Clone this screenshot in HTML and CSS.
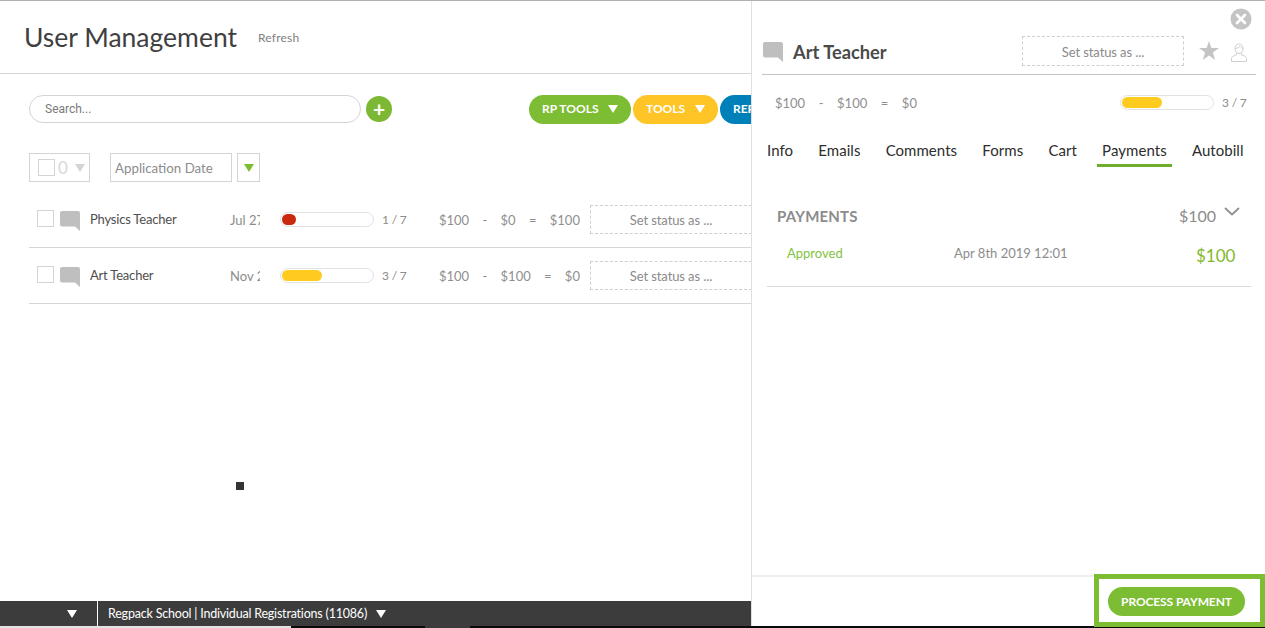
FILE: index.html
```html
<!DOCTYPE html>
<html lang="en">
<head>
<meta charset="utf-8">
<title>User Management</title>
<link rel="stylesheet" href="styles.css">
</head>
<body>
<svg class="defs" aria-hidden="true"><defs>
<symbol id="bubble" viewBox="0 0 20 20"><path d="M2 0H18a2 2 0 0 1 2 2V20L15 15.500H2a2 2 0 0 1-2-2V2a2 2 0 0 1 2-2Z" fill="#bfbfbf"/></symbol>
</defs></svg>
<div class="app">
  <main class="main">
    <header class="page-head">
      <h1 class="page-title">User Management</h1>
      <a class="refresh">Refresh</a>
    </header>
    <div class="toolbar">
      <div class="search">Search...</div>
      <span class="add">+</span>
      <div class="tools">
        <span class="pill pill-green">RP TOOLS<i class="tri"></i></span>
        <span class="pill pill-yellow">TOOLS<i class="tri"></i></span>
        <span class="pill pill-blue">REPORTS<i class="tri"></i></span>
      </div>
    </div>
    <div class="filters">
      <div class="select-box"><span class="check faint"></span><span class="count">0</span><i class="tri tri-grey"></i></div>
      <div class="sort-box">Application Date</div>
      <div class="sort-arrow"><i class="tri tri-green"></i></div>
    </div>
    <div class="row">
      <span class="check"></span>
      <svg class="bubble"><use href="#bubble"/></svg>
      <span class="name">Physics Teacher</span>
      <span class="date">Jul 27</span>
      <span class="progress"><span class="fill fill-red"></span></span>
      <span class="ratio">1 / 7</span>
      <span class="money"><span>$100</span><span>-</span><span>$0</span><span>=</span><span>$100</span></span>
      <span class="status">Set status as ...</span>
    </div>
    <div class="row">
      <span class="check"></span>
      <svg class="bubble"><use href="#bubble"/></svg>
      <span class="name">Art Teacher</span>
      <span class="date">Nov 27</span>
      <span class="progress"><span class="fill fill-yellow"></span></span>
      <span class="ratio">3 / 7</span>
      <span class="money"><span>$100</span><span>-</span><span>$100</span><span>=</span><span>$0</span></span>
      <span class="status">Set status as ...</span>
    </div>
    <span class="loader"></span>
    <footer class="bottom-bar">
      <div class="bar-left"><i class="tri"></i></div>
      <div class="bar-title">Regpack School | Individual Registrations (11086)<i class="tri"></i></div>
    </footer>
  </main>
  <aside class="panel">
    <div class="panel-close">
      <svg width="22" height="22" viewBox="0 0 22 22"><circle cx="11" cy="11" r="10.500" fill="#c4c4c4"/><path d="M7 7L15 15M15 7L7 15" stroke="#fff" stroke-width="2.600" stroke-linecap="round"/></svg>
    </div>
    <div class="panel-head">
      <svg class="bubble panel-bubble"><use href="#bubble"/></svg>
      <h2 class="panel-name">Art Teacher</h2>
      <span class="status status-panel">Set status as ...</span>
      <svg class="star" width="20" height="19" viewBox="0 0 20 19"><path d="M10 0L12.400 6.900H20L13.900 11.400L16.200 19L10 14.400L3.800 19L6.100 11.400L0 6.900H7.600Z" fill="#c4c4c4"/></svg>
      <svg class="person" width="16" height="19" viewBox="0 0 16 19" fill="none" stroke="#cfcfcf"><path d="M8 1C5.300 1 4 3 4 5.500C4 8 5.500 10.500 8 10.500C10.500 10.500 12 8 12 5.500C12 3 10.700 1 8 1Z"/><path d="M4.200 5.500C6 5.500 8 4.500 9 3.200C9.800 4.500 11 5.300 11.800 5.500"/><path d="M5.500 10L5.300 11.800L1.500 13.500C.8 13.900 .5 14.500 .5 15.300V18.500H15.500V15.300C15.500 14.500 15.200 13.900 14.500 13.500L10.700 11.800L10.500 10"/></svg>
    </div>
    <div class="panel-summary">
      <span class="money money-panel"><span>$100</span><span>-</span><span>$100</span><span>=</span><span>$0</span></span>
      <span class="progress"><span class="fill fill-yellow"></span></span>
      <span class="ratio">3 / 7</span>
    </div>
    <nav class="tabs">
      <a class="tab">Info</a>
      <a class="tab">Emails</a>
      <a class="tab">Comments</a>
      <a class="tab">Forms</a>
      <a class="tab">Cart</a>
      <a class="tab tab-active">Payments</a>
      <a class="tab">Autobill</a>
    </nav>
    <section class="payments">
      <div class="payments-head">
        <h3 class="payments-title">PAYMENTS</h3>
        <span class="payments-total">$100</span>
        <svg class="chevron" width="16" height="9" viewBox="0 0 16 9" fill="none" stroke="#8f8f8f" stroke-width="1.800"><path d="M1 1L8 7.500L15 1"/></svg>
      </div>
      <div class="payment-row">
        <span class="pay-state">Approved</span>
        <span class="pay-date">Apr 8th 2019 12:01</span>
        <span class="pay-amount">$100</span>
      </div>
    </section>
    <div class="panel-foot">
      <span class="process">PROCESS PAYMENT</span>
    </div>
    <span class="highlight"></span>
  </aside>
</div>
<div class="edge-strip">
  <span class="edge edge-light"></span>
  <span class="edge edge-black"></span>
  <span class="edge edge-grey"></span>
  <span class="edge edge-rest"></span>
</div>
</body>
</html>
```

FILE: styles.css
```css
* { box-sizing: border-box; }
html, body { margin: 0; height: 100%; overflow: hidden; background: #fff; }
body { font-family: Lato, "Liberation Sans", sans-serif; color: #8b8b8b; }
.defs { display: none; }
.app { display: flex; height: 626px; border-top: 1px solid #b0b0b0; position: relative; }

.edge-strip { display: flex; height: 2px; }
.edge { display: block; height: 2px; }
.edge-light { width: 291px; background: #e2e2e2; }
.edge-black { width: 134px; background: #0a0a0a; }
.edge-grey { width: 45px; background: #3a3a3a; }
.edge-rest { flex: 1; background: #0a0a0a; }

.tri { display: inline-block; flex: none; width: 0; height: 0; border-left: 5.500px solid transparent; border-right: 5.500px solid transparent; border-top: 8px solid #fff; }
.tri-grey { border-top-color: #d4d4d4; }
.tri-green { border-top-color: #7cbd34; border-left-width: 5px; border-right-width: 5px; }

.main { width: 751px; flex: none; display: flex; flex-direction: column; overflow: hidden; position: relative; height: 625px; }
.page-head { height: 73px; flex: none; display: flex; align-items: center; padding: 0 0 0 24px; border-bottom: 1px solid #d6d6d6; }
.page-title { margin: 0; font-size: 26.500px; font-weight: 400; color: #3f3f3f; line-height: 34px; }
.refresh { margin-left: 21px; font-size: 12px; color: #808080; letter-spacing: .2px; padding-top: 1px; }

.toolbar { display: flex; align-items: center; padding: 20px 0 0 29px; height: 50px; flex: none; }
.search { width: 332px; height: 28px; border: 1px solid #d4d4d4; border-radius: 14px; padding-left: 15px; font: 12px/27px Roboto, sans-serif; color: #7a7a7a; flex: none; }
.add { width: 26px; height: 26px; margin-left: 5px; border-radius: 50%; background: #7cb834; color: #fff; font: 700 21px/25px Lato, sans-serif; text-align: center; flex: none; }
.tools { display: flex; gap: 2px; margin-left: 137px; flex: none; }
.pill { height: 29px; border-radius: 15px; color: #fff; font-size: 12px; font-weight: 700; display: flex; align-items: center; padding: 0 13px 1px; gap: 10px; flex: none; white-space: nowrap; }
.pill-green { background: #7cbd34; width: 102px; }
.pill-yellow { background: #ffc425; width: 85px; }
.pill-blue { background: #0080b8; }

.filters { display: flex; padding: 29px 0 0 29px; height: 68px; flex: none; }
.select-box { width: 61px; height: 29px; border: 1px solid #d4d4d4; display: flex; align-items: center; padding-left: 8px; }
.count { font-size: 17px; color: #d8d8d8; margin-left: 3px; margin-right: 7px; }
.sort-box { width: 122px; height: 29px; margin-left: 20px; border: 1px solid #d4d4d4; font-size: 13.300px; line-height: 28px; padding-left: 4px; color: #8c8c8c; }
.sort-arrow { width: 23px; height: 29px; margin-left: 5px; border: 1px solid #d4d4d4; display: flex; align-items: center; justify-content: center; }

.check { width: 17px; height: 17px; border: 1px solid #d4d4d4; flex: none; display: block; }
.bubble { width: 20px; height: 20px; flex: none; display: block; }

.row { margin-left: 29px; height: 56px; border-bottom: 1px solid #d6d6d6; display: flex; align-items: center; padding-left: 8px; font-size: 14px; flex: none; }
.row .check { margin: 0 6px 0 0; position: relative; top: -1px; }
.row .bubble { position: relative; top: 1px; }
.name { width: 140px; margin-left: 10px; color: #4e4e4e; font-size: 13px; flex: none; letter-spacing: -.2px; padding-bottom: 2px; }
.date { width: 30px; overflow: hidden; white-space: nowrap; font-size: 13px; color: #8c8c8c; flex: none; }
.progress { width: 94px; height: 15px; margin-left: 21px; border: 1px solid #e2e2e2; border-radius: 8px; padding: 1px; flex: none; display: block; }
.row .progress { margin-left: 20px; }
.fill { display: block; height: 11px; border-radius: 6px; }
.fill-red { width: 14px; background: #c9290c; }
.fill-yellow { width: 40px; background: #ffcb1f; }
.ratio { width: 57px; margin-left: 8px; font-size: 12px; letter-spacing: -.2px; color: #8c8c8c; flex: none; }
.money { width: 141px; display: flex; justify-content: space-between; font-size: 13px; color: #8f8f8f; flex: none; }
.status { width: 162px; height: 29px; margin-left: 10px; border: 1px dashed #cfcfcf; text-align: center; font-size: 13px; line-height: 29px; letter-spacing: -.1px; color: #8a8a8a; flex: none; display: block; }

.loader { position: absolute; left: 236px; top: 481px; width: 8px; height: 8px; background: #333; }

.bottom-bar { margin-top: auto; height: 25px; background: #3c3c3c; color: #fff; font-size: 12.500px; display: flex; flex: none; }
.bar-left { width: 98px; border-right: 1px solid #fff; display: flex; align-items: center; justify-content: flex-end; padding-right: 20px; }
.bar-title { padding-left: 10px; display: flex; align-items: center; gap: 9px; letter-spacing: -.2px; }

.panel { flex: 1; border-left: 1px solid #e0e0e0; height: 625px; display: flex; flex-direction: column; position: relative; }
.panel-close { height: 29px; display: flex; justify-content: flex-end; padding: 7px 13px 0 0; flex: none; }
.panel-head { margin: 0 9px 0 10px; height: 45px; border-bottom: 1px solid #c4c4c4; display: flex; align-items: flex-start; padding-top: 6px; flex: none; }
.panel-bubble { margin: 6px 0 0 1px; }
.panel-name { width: 229px; margin: 0 0 0 10px; font-size: 18.300px; font-weight: 700; color: #4a4a4a; line-height: 32px; }
.status-panel { margin-left: 0; height: 30px; line-height: 31px; }
.star { margin: 5px 0 0 15px; }
.person { margin: 7px 0 0 12px; }
.panel-summary { display: flex; align-items: center; height: 55px; padding-left: 23px; flex: none; }
.money-panel { width: 142px; }
.panel-summary .progress { margin-left: 203px; }
.panel-summary .ratio { width: auto; }

.tabs { display: flex; gap: 14.200px; padding-left: 9.500px; height: 37px; flex: none; }
.tab { padding: 0 5.500px; height: 37px; line-height: 40px; font-size: 15px; letter-spacing: .05px; color: #2d2d2d; }
.tab-active { border-bottom: 3px solid #6fae2c; }

.payments { margin: 0 14px 0 15px; padding-top: 37px; border-bottom: 1px solid #d9d9d9; height: 120px; flex: none; }
.payments-head { display: flex; align-items: center; height: 24px; padding-left: 10px; }
.payments-title { margin: 0; width: 402px; font-size: 15px; font-weight: 700; letter-spacing: .2px; color: #8c8c8c; }
.payments-total { font-size: 16px; color: #8c8c8c; margin-top: -2px; }
.chevron { margin: -10px 0 0 8px; }
.payment-row { display: flex; align-items: center; height: 36px; padding: 14px 0 0 20px; font-size: 13px; }
.pay-state { width: 167px; color: #82c341; }
.pay-date { width: 242px; color: #8c8c8c; font-size: 13px; }
.pay-amount { font-size: 17px; color: #82b82f; padding-top: 4px; }

.panel-foot { margin-top: auto; height: 51px; border-top: 2px solid #eee; display: flex; align-items: center; justify-content: flex-end; padding: 0 20px 0 0; flex: none; }
.process { height: 29px; width: 137px; border-radius: 15px; background: #7cbd34; color: #fff; font-size: 12px; letter-spacing: -.1px; font-weight: 700; line-height: 29px; text-align: center; }
.highlight { position: absolute; left: 342px; top: 573px; width: 171px; height: 53px; border: 5px solid #7cbd34; }
```
